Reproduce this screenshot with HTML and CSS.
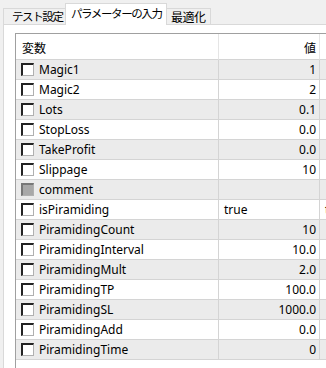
FILE: index.html
```html
<!DOCTYPE html>
<html lang="ja">
<head>
    <meta charset="UTF-8">
    <title>パラメーターの入力</title>
    <link rel="stylesheet" href="styles.css">
</head>
<body>
    <div class="tabs">
        <div class="tab first">テスト設定</div>
        <div class="tab active">パラメーターの入力</div>
        <div class="tab last">最適化</div>
    </div>
    <div class="panel">
        <div class="grid">
            <div class="row head">
                <div class="cell">変数</div>
                <div class="cell num">値</div>
                <div class="cell"></div>
            </div>
            <div class="row alt">
                <div class="cell"><span class="check"></span>Magic1</div>
                <div class="cell num">1</div>
                <div class="cell"></div>
            </div>
            <div class="row">
                <div class="cell"><span class="check"></span>Magic2</div>
                <div class="cell num">2</div>
                <div class="cell"></div>
            </div>
            <div class="row alt">
                <div class="cell"><span class="check"></span>Lots</div>
                <div class="cell num">0.1</div>
                <div class="cell"></div>
            </div>
            <div class="row">
                <div class="cell"><span class="check"></span>StopLoss</div>
                <div class="cell num">0.0</div>
                <div class="cell"></div>
            </div>
            <div class="row alt">
                <div class="cell"><span class="check"></span>TakeProfit</div>
                <div class="cell num">0.0</div>
                <div class="cell"></div>
            </div>
            <div class="row">
                <div class="cell"><span class="check"></span>Slippage</div>
                <div class="cell num">10</div>
                <div class="cell"></div>
            </div>
            <div class="row alt">
                <div class="cell"><span class="check disabled"></span>comment</div>
                <div class="cell num"></div>
                <div class="cell"></div>
            </div>
            <div class="row">
                <div class="cell"><span class="check"></span>isPiramiding</div>
                <div class="cell">true</div>
                <div class="cell">true</div>
            </div>
            <div class="row alt">
                <div class="cell"><span class="check"></span>PiramidingCount</div>
                <div class="cell num">10</div>
                <div class="cell"></div>
            </div>
            <div class="row">
                <div class="cell"><span class="check"></span>PiramidingInterval</div>
                <div class="cell num">10.0</div>
                <div class="cell"></div>
            </div>
            <div class="row alt">
                <div class="cell"><span class="check"></span>PiramidingMult</div>
                <div class="cell num">2.0</div>
                <div class="cell"></div>
            </div>
            <div class="row">
                <div class="cell"><span class="check"></span>PiramidingTP</div>
                <div class="cell num">100.0</div>
                <div class="cell"></div>
            </div>
            <div class="row alt">
                <div class="cell"><span class="check"></span>PiramidingSL</div>
                <div class="cell num">1000.0</div>
                <div class="cell"></div>
            </div>
            <div class="row">
                <div class="cell"><span class="check"></span>PiramidingAdd</div>
                <div class="cell num">0.0</div>
                <div class="cell"></div>
            </div>
            <div class="row alt">
                <div class="cell"><span class="check"></span>PiramidingTime</div>
                <div class="cell num">0</div>
                <div class="cell"></div>
            </div>
        </div>
    </div>
</body>
</html>
```

FILE: styles.css
```css
* {
    margin: 0;
    padding: 0;
    box-sizing: border-box;
}

html, body {
    height: 100%;
    overflow: hidden;
}

body {
    background: #f0f0f0;
    font-family: 'Noto Sans', 'Noto Sans CJK JP', sans-serif;
    font-size: 12px;
    color: #000;
    display: flex;
    flex-direction: column;
}

.tabs {
    display: flex;
    align-items: flex-end;
    height: 24px;
    padding-left: 3px;
    font-family: 'Noto Sans CJK JP', sans-serif;
    font-size: 11.5px;
    letter-spacing: -1.4px;
}

.tab {
    height: 16px;
    line-height: 15px;
    border: 1px solid #d9d9d9;
    border-bottom: none;
    background: #f0f0f0;
    color: #000;
    white-space: nowrap;
}

.tab.first {
    width: 63px;
    padding-left: 8px;
}

.tab.last {
    width: 45px;
    padding-left: 4px;
    font-size: 12px;
    letter-spacing: -0.5px;
}

.tab + .tab {
    margin-left: -1px;
}

.tab.active {
    width: 102px;
    height: 22px;
    line-height: 19px;
    padding-left: 5px;
    background: #fff;
    position: relative;
    margin-bottom: -1px;
    z-index: 1;
}

.panel {
    flex: 1;
    margin-left: 3px;
    background: #fff;
    border-top: 1px solid #d9d9d9;
    border-left: 1px solid #d9d9d9;
    padding: 8px 0 0 11px;
    overflow: hidden;
}

.grid {
    width: 400px;
    height: 100%;
    border-top: 1px solid #a0a0a0;
    border-left: 1px solid #a0a0a0;
}

.row {
    display: grid;
    grid-template-columns: 203px 101px 96px;
    height: 20px;
    background: #fff;
}

.row.alt {
    background: #ebebeb;
}

.row.head {
    height: 26px;
}

.cell {
    display: flex;
    align-items: center;
    padding: 0 3px 0 5px;
    border-right: 1px solid #d4d4d4;
    border-bottom: 1px solid #d4d4d4;
    white-space: nowrap;
    overflow: hidden;
}

.head .cell {
    padding-left: 6px;
    border-right-color: #e5e5e5;
    border-bottom-color: #d4d4d4;
    font-family: 'Noto Sans CJK JP', sans-serif;
    padding-top: 1px;
}

.cell.num {
    justify-content: flex-end;
}

.check {
    width: 13px;
    height: 13px;
    margin-right: 5px;
    background: #fff;
    border-top: 2px solid #222;
    border-left: 2px solid #222;
    border-right: 1px solid #b0b0b0;
    border-bottom: 1px solid #b0b0b0;
    flex: none;
}

.check.disabled {
    background: #a8a8a8;
    border-top-color: #777;
    border-left-color: #777;
}
```
